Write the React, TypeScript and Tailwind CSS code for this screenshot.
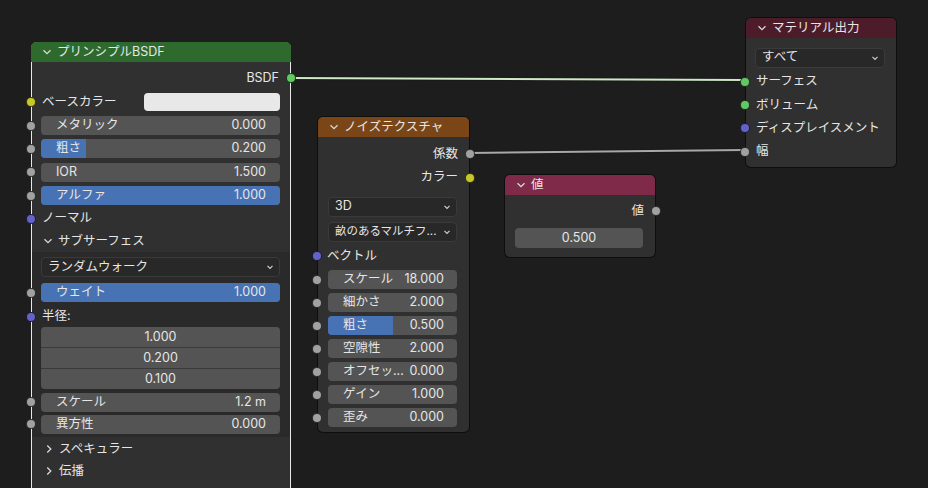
import type { ReactNode } from "react";

const SOCKET = {
  grey: "bg-[#a1a1a1]",
  yellow: "bg-[#c7c729]",
  purple: "bg-[#6363c7]",
  green: "bg-[#63c763]",
};

type SocketColor = keyof typeof SOCKET;

function Socket({ color, side }: { color: SocketColor; side: "left" | "right" }) {
  return (
    <span
      className={`absolute top-1/2 -translate-y-1/2 w-[10px] h-[10px] rounded-full border border-black/70 ${SOCKET[color]} ${
        side === "left" ? "-left-[6px]" : "-right-[6px]"
      }`}
    />
  );
}

function Chevron({ open = true }: { open?: boolean }) {
  return (
    <svg width="10" height="10" viewBox="0 0 10 10" className="shrink-0">
      {open ? (
        <path d="M1.5 3.2 L5 6.7 L8.5 3.2" fill="none" stroke="#d8d8d8" strokeWidth="1.3" />
      ) : (
        <path d="M3.3 1.5 L6.8 5 L3.3 8.5" fill="none" stroke="#d8d8d8" strokeWidth="1.3" />
      )}
    </svg>
  );
}

function Row({ h, children, className = "" }: { h: string; children: ReactNode; className?: string }) {
  return <div className={`relative flex items-center ${h} ${className}`}>{children}</div>;
}

function Slider({ label, value, fill = 0, pl = "pl-[15px]", pr = "pr-[14px]" }: { label: string; value: string; fill?: number; pl?: string; pr?: string }) {
  return (
    <div className="relative flex-1 min-w-0 h-[19px] rounded-[4px] bg-[#545454]">
      {fill > 0 && <div className="absolute inset-y-0 left-0 rounded-l-[4px] bg-[#4772b3]" style={{ width: `${fill * 100}%`, borderRadius: fill >= 1 ? 4 : undefined }} />}
      <div className={`relative flex h-full items-center justify-between ${pl} ${pr} text-[#e6e6e6] whitespace-nowrap`}>
        <span>{label}</span>
        <span className="shrink-0 ml-1">{value}</span>
      </div>
    </div>
  );
}

function Dropdown({ label, small = false }: { label: string; small?: boolean }) {
  return (
    <div className="flex-1 min-w-0 h-[20px] rounded-[4px] bg-[#282828] border border-[#3a3a3a] flex items-center justify-between pl-[6px] pr-[5px] text-[#e6e6e6] whitespace-nowrap">
      <span className={small ? "text-[11.5px]" : ""}>{label}</span>
      <svg width="8" height="8" viewBox="0 0 8 8" className="shrink-0 ml-[2px]">
        <path d="M1.5 2.8 L4 5.3 L6.5 2.8" fill="none" stroke="#d0d0d0" strokeWidth="1.2" />
      </svg>
    </div>
  );
}

function Header({ title, bg }: { title: string; bg: string }) {
  return (
    <div className={`h-[20px] flex items-center gap-[5px] pl-[11px] rounded-t-[5px] ${bg} text-[#e6e6e6]`}>
      <Chevron />
      <span>{title}</span>
    </div>
  );
}

function Principled() {
  return (
    <div className="absolute left-[31px] top-[42px] w-[260px] h-[470px] rounded-[6px] border border-[#e8e8e8] bg-[#303030]">
      <div className="-m-px">
        <div className="h-[20px] flex items-center gap-[5px] pl-[11px] rounded-t-[5px] bg-[#2e6a2e] text-[#e6e6e6]">
          <Chevron />
          <span>プリンシプルBSDF</span>
        </div>
      </div>
      <div className="flex flex-col pt-[5px]">
        <Row h="h-[24px]" className="justify-end pr-[11px]">
          <span>BSDF</span>
          <Socket color="green" side="right" />
        </Row>
        <Row h="h-[24px]" className="pl-[10px] pr-[10px]">
          <Socket color="yellow" side="left" />
          <span className="w-[102px]">ベースカラー</span>
          <div className="flex-1 h-[18px] rounded-[4px] bg-[#e8e8e8]" />
        </Row>
        <Row h="h-[23px]" className="pl-[9px] pr-[10px]">
          <Socket color="grey" side="left" />
          <Slider label="メタリック" value="0.000" />
        </Row>
        <Row h="h-[23px]" className="pl-[9px] pr-[10px]">
          <Socket color="grey" side="left" />
          <Slider label="粗さ" value="0.200" fill={0.19} />
        </Row>
        <Row h="h-[24px]" className="pl-[9px] pr-[10px]">
          <Socket color="grey" side="left" />
          <Slider label="IOR" value="1.500" />
        </Row>
        <Row h="h-[23px]" className="pl-[9px] pr-[10px]">
          <Socket color="grey" side="left" />
          <Slider label="アルファ" value="1.000" fill={1} />
        </Row>
        <Row h="h-[23px]" className="pl-[10px]">
          <Socket color="purple" side="left" />
          <span>ノーマル</span>
        </Row>
        <Row h="h-[22px]" className="pl-[11px] gap-[5px]">
          <Chevron />
          <span>サブサーフェス</span>
        </Row>
        <div className="flex flex-col bg-[#2a2a2a] pt-[3px] pb-[2px]">
          <Row h="h-[24px]" className="pl-[9px] pr-[10px]">
            <Dropdown label="ランダムウォーク" />
          </Row>
          <Row h="h-[27px]" className="pl-[9px] pr-[10px]">
            <Socket color="grey" side="left" />
            <Slider label="ウェイト" value="1.000" fill={1} />
          </Row>
          <Row h="h-[21px]" className="pl-[10px]">
            <Socket color="purple" side="left" />
            <span>半径:</span>
          </Row>
          <div className="ml-[9px] mr-[10px] mb-[2px] rounded-[4px] overflow-hidden flex flex-col gap-px bg-[#3a3a3a]">
            {["1.000", "0.200", "0.100"].map((v) => (
              <div key={v} className="h-[20px] flex items-center justify-center bg-[#545454]">
                {v}
              </div>
            ))}
          </div>
          <Row h="h-[22px]" className="pl-[9px] pr-[10px]">
            <Socket color="grey" side="left" />
            <Slider label="スケール" value="1.2 m" />
          </Row>
          <Row h="h-[22px]" className="pl-[9px] pr-[10px]">
            <Socket color="grey" side="left" />
            <Slider label="異方性" value="0.000" />
          </Row>
        </div>
        <Row h="h-[24px]" className="pl-[12px] gap-[5px]">
          <Chevron open={false} />
          <span>スペキュラー</span>
        </Row>
        <Row h="h-[20px]" className="pl-[12px] gap-[5px]">
          <Chevron open={false} />
          <span>伝播</span>
        </Row>
      </div>
    </div>
  );
}

function Noise() {
  const sliders: [string, string, number][] = [
    ["スケール", "18.000", 0],
    ["細かさ", "2.000", 0],
    ["粗さ", "0.500", 0.5],
    ["空隙性", "2.000", 0],
    ["オフセッ...", "0.000", 0],
    ["ゲイン", "1.000", 0],
    ["歪み", "0.000", 0],
  ];
  return (
    <div className="absolute left-[318px] top-[117px] w-[151px] rounded-[5px] bg-[#303030] shadow-[0_0_0_1px_rgba(0,0,0,0.5)] pb-[3px]">
      <Header title="ノイズテクスチャ" bg="bg-[#7a4618]" />
      <div className="flex flex-col pt-[5px]">
        <Row h="h-[24px]" className="justify-end pr-[11px]">
          <span>係数</span>
          <Socket color="grey" side="right" />
        </Row>
        <Row h="h-[23px]" className="justify-end pr-[11px]">
          <span>カラー</span>
          <Socket color="yellow" side="right" />
        </Row>
        <Row h="h-[30px]" className="pl-[10px] pr-[12px] pt-[5px]">
          <Dropdown label="3D" />
        </Row>
        <Row h="h-[25px]" className="pl-[10px] pr-[12px]">
          <Dropdown label="畝のあるマルチフ..." small />
        </Row>
        <Row h="h-[24px]" className="pl-[9px]">
          <Socket color="purple" side="left" />
          <span>ベクトル</span>
        </Row>
        {sliders.map(([l, v, f]) => (
          <Row key={l} h="h-[23px]" className="pl-[10px] pr-[12px]">
            <Socket color="grey" side="left" />
            <Slider label={l} value={v} fill={f} pr="pr-[13px]" />
          </Row>
        ))}
      </div>
    </div>
  );
}

function ValueNode() {
  return (
    <div className="absolute left-[505px] top-[175px] w-[150px] h-[82px] rounded-[5px] bg-[#303030] shadow-[0_0_0_1px_rgba(0,0,0,0.5)]">
      <Header title="値" bg="bg-[#7f2a48]" />
      <div className="flex flex-col pt-[4px]">
        <Row h="h-[24px]" className="justify-end pr-[11px]">
          <span>値</span>
          <Socket color="grey" side="right" />
        </Row>
        <Row h="h-[30px]" className="pl-[10px] pr-[12px]">
          <div className="flex-1 h-[20px] rounded-[4px] bg-[#545454] flex items-center justify-center">0.500</div>
        </Row>
      </div>
    </div>
  );
}

function MaterialOutput() {
  const rows: [string, SocketColor][] = [
    ["サーフェス", "green"],
    ["ボリューム", "green"],
    ["ディスプレイスメント", "purple"],
    ["幅", "grey"],
  ];
  return (
    <div className="absolute left-[746px] top-[18px] w-[150px] rounded-[5px] bg-[#303030] shadow-[0_0_0_1px_rgba(0,0,0,0.5)] pb-[4px]">
      <Header title="マテリアル出力" bg="bg-[#4c1c2b]" />
      <div className="flex flex-col pt-[7px]">
        <Row h="h-[25px]" className="pl-[9px] pr-[11px]">
          <Dropdown label="すべて" />
        </Row>
        {rows.map(([l, c]) => (
          <Row key={l} h="h-[23.3px]" className="pl-[10px]">
            <Socket color={c} side="left" />
            <span>{l}</span>
          </Row>
        ))}
      </div>
    </div>
  );
}

export default function App() {
  return (
    <div className="relative w-[928px] h-[488px] overflow-hidden bg-[#1d1d1d] text-[12.5px] leading-none text-[#e6e6e6] font-[family-name:Inter,'Noto_Sans_CJK_JP',sans-serif]">
      <svg className="absolute inset-0" width="928" height="488">
        <line x1="290" y1="78" x2="745" y2="80" stroke="#1a1a1a" strokeWidth="4" />
        <line x1="290" y1="78" x2="745" y2="80" stroke="#cfe8c8" strokeWidth="2" />
        <line x1="469" y1="153" x2="745" y2="150" stroke="#1a1a1a" strokeWidth="4" />
        <line x1="469" y1="153" x2="745" y2="150" stroke="#a8a8a8" strokeWidth="2" />
      </svg>
      <Principled />
      <Noise />
      <ValueNode />
      <MaterialOutput />
    </div>
  );
}
